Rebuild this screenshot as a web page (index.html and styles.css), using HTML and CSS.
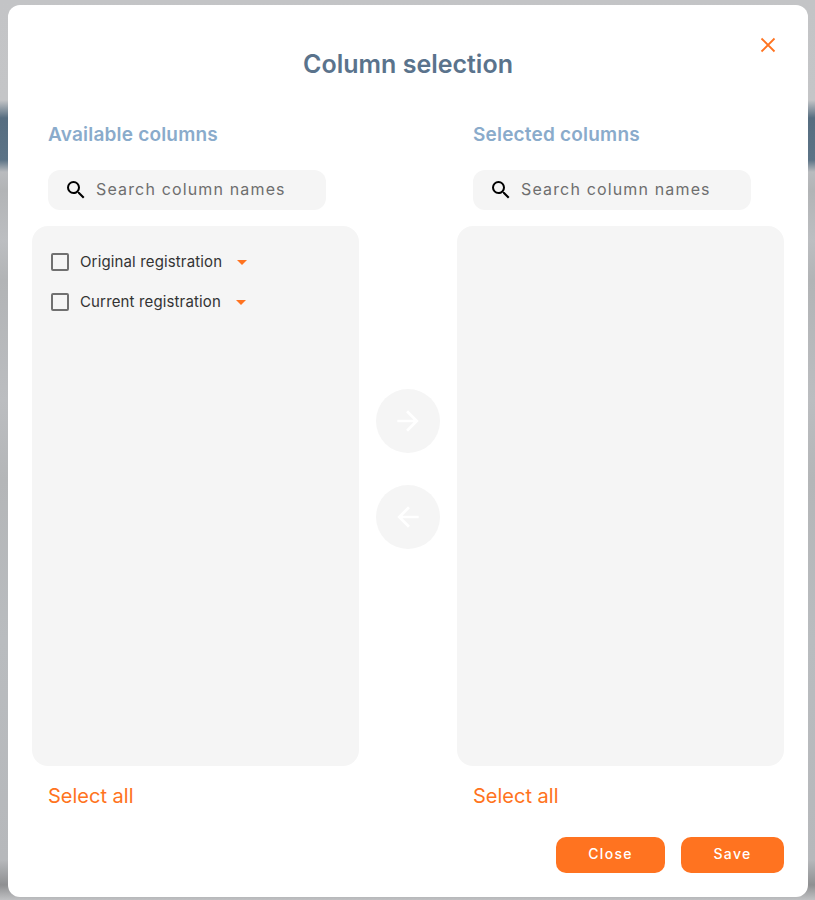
FILE: index.html
```html
<!DOCTYPE html>
<html lang="en">
<head>
    <meta charset="UTF-8">
    <meta name="viewport" content="width=device-width, initial-scale=1.0">
    <title>Column selection</title>
    <link rel="stylesheet" href="styles.css">
</head>
<body>
<div class="modal">
    <button class="close-x" aria-label="Close">
        <svg width="18" height="18" viewBox="0 0 18 18"><path d="M2.5 2.5l13 13M15.500 2.500l-13 13" stroke="#ff7320" stroke-width="1.800" fill="none"/></svg>
    </button>
    <h2 class="modal-title">Column selection</h2>
    <div class="columns">
        <div class="column">
            <h3 class="column-title">Available columns</h3>
            <div class="search">
                <svg width="24" height="24" viewBox="0 0 24 24"><path d="M15.500 14h-.79l-.28-.27A6.471 6.471 0 0 0 16 9.500 6.500 6.500 0 1 0 9.500 16c1.610 0 3.090-.59 4.230-1.570l.27.28v.79l5 4.990L20.490 19l-4.990-5zm-6 0C7.010 14 5 11.990 5 9.500S7.010 5 9.500 5 14 7.010 14 9.500 11.990 14 9.500 14z" fill="#000"/></svg>
                <span class="search-text">Search column names</span>
            </div>
            <div class="list">
                <div class="list-item">
                    <span class="checkbox"></span>
                    <span class="item-label">Original registration</span>
                    <span class="caret"></span>
                </div>
                <div class="list-item">
                    <span class="checkbox"></span>
                    <span class="item-label">Current registration</span>
                    <span class="caret"></span>
                </div>
            </div>
            <a class="select-all">Select all</a>
        </div>
        <div class="arrows">
            <button class="arrow-btn" aria-label="Add">
                <svg width="32" height="32" viewBox="0 0 24 24"><path d="M12 4l-1.410 1.410L16.170 11H4v2h12.170l-5.580 5.590L12 20l8-8z" fill="#fff"/></svg>
            </button>
            <button class="arrow-btn" aria-label="Remove">
                <svg width="32" height="32" viewBox="0 0 24 24"><path d="M20 11H7.830l5.590-5.590L12 4l-8 8 8 8 1.410-1.410L7.830 13H20v-2z" fill="#fff"/></svg>
            </button>
        </div>
        <div class="column">
            <h3 class="column-title">Selected columns</h3>
            <div class="search">
                <svg width="24" height="24" viewBox="0 0 24 24"><path d="M15.500 14h-.79l-.28-.27A6.471 6.471 0 0 0 16 9.500 6.500 6.500 0 1 0 9.500 16c1.610 0 3.090-.59 4.230-1.570l.27.28v.79l5 4.990L20.490 19l-4.990-5zm-6 0C7.010 14 5 11.990 5 9.500S7.010 5 9.500 5 14 7.010 14 9.500 11.990 14 9.500 14z" fill="#000"/></svg>
                <span class="search-text">Search column names</span>
            </div>
            <div class="list"></div>
            <a class="select-all">Select all</a>
        </div>
    </div>
    <div class="actions">
        <button class="btn btn-close">Close</button>
        <button class="btn btn-save">Save</button>
    </div>
</div>
</body>
</html>
```

FILE: styles.css
```css
html, body {
    height: 100%;
}
body {
    margin: 0;
    padding: 5px 7px 3px 8px;
    box-sizing: border-box;
    font-family: "Inter", "Open Sans", sans-serif;
    background: linear-gradient(to bottom,
        #c3c4c6 0, #c4c5c7 100px, #566d80 118px, #5c7386 160px, #b9bbbe 172px,
        #b2b4b6 190px, #bcbec1 240px, #b2b4b6 280px, #bbbdc0 400px, #b4b6b8 480px,
        #b9bcbf 640px, #b6b8bb 860px, #8f9092 885px, #c0c1c3 900px);
}
.modal {
    position: relative;
    height: 892px;
    box-sizing: border-box;
    background-color: #fff;
    border-radius: 12px;
    padding: 43px 24px 24px;
    display: flex;
    flex-direction: column;
}
.close-x {
    position: absolute;
    top: 31px;
    right: 31px;
    width: 18px;
    height: 18px;
    padding: 0;
    border: 0;
    background: none;
}
.modal-title {
    margin: 0;
    text-align: center;
    font-size: 25px;
    line-height: 32px;
    font-weight: 600;
    color: #5a738c;
}
.columns {
    display: flex;
    justify-content: space-between;
    margin-top: 43px;
}
.column {
    width: 327px;
    display: flex;
    flex-direction: column;
}
.column-title {
    margin: 0 0 0 16px;
    font-size: 19px;
    line-height: 24px;
    font-weight: 600;
    letter-spacing: 0.2px;
    color: #8aabcb;
}
.search {
    margin: 23px 0 16px 16px;
    width: 278px;
    height: 40px;
    box-sizing: border-box;
    padding-left: 16px;
    display: flex;
    align-items: center;
    gap: 8px;
    background-color: #f5f5f5;
    border-radius: 12px;
}
.search-text {
    padding-bottom: 2px;
    font-size: 16px;
    letter-spacing: 1.15px;
    color: #6e6e6e;
}
.list {
    height: 540px;
    box-sizing: border-box;
    padding: 16px 19px;
    background-color: #f5f5f5;
    border-radius: 16px;
}
.list-item {
    height: 40px;
    display: flex;
    align-items: center;
    font-size: 15px;
    letter-spacing: 0.14px;
    color: #333;
}
.checkbox {
    width: 14px;
    height: 14px;
    border: 2px solid #707070;
    border-radius: 2px;
    margin-right: 11px;
}
.item-label {
    position: relative;
    top: -1px;
    margin-right: 15px;
}
.caret {
    width: 0;
    height: 0;
    border-left: 5px solid transparent;
    border-right: 5px solid transparent;
    border-top: 5px solid #ff7320;
}
.select-all {
    margin: 18px 0 0 16px;
    font-size: 20px;
    line-height: 24px;
    color: #ff7320;
}
.arrows {
    display: flex;
    flex-direction: column;
    gap: 32px;
    align-self: flex-start;
    margin-top: 266px;
}
.arrow-btn {
    width: 64px;
    height: 64px;
    padding: 0;
    border: 0;
    border-radius: 50%;
    background-color: #f5f5f5;
    display: flex;
    align-items: center;
    justify-content: center;
}
.actions {
    display: flex;
    justify-content: flex-end;
    gap: 16px;
    margin-top: 29px;
}
.btn {
    height: 36px;
    padding: 0 0 3px;
    border: 0;
    border-radius: 10px;
    background-color: #ff7320;
    color: #fff;
    font-family: inherit;
    font-size: 14px;
    font-weight: 500;
    letter-spacing: 1.3px;
}
.btn-close {
    width: 109px;
}
.btn-save {
    width: 103px;
}
```
